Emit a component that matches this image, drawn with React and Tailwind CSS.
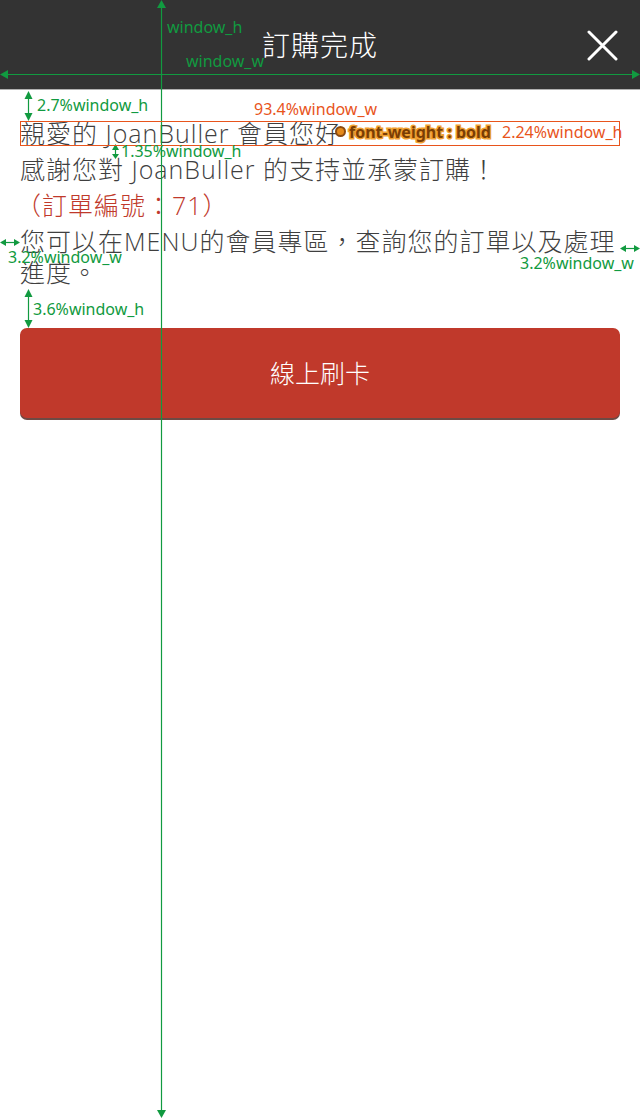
import React from "react";

const G = "#119a40";

function Label({ className, children, color = "text-[#119a40]" }) {
  return (
    <div
      className={`absolute whitespace-nowrap text-[16px] leading-[16px] ${color} ${className}`}
      style={{ fontFamily: '"Noto Sans", "Open Sans", sans-serif' }}
    >
      {children}
    </div>
  );
}

export default function App() {
  const font = '"Open Sans", "Noto Sans CJK TC", "Noto Sans", sans-serif';
  return (
    <div className="relative w-[640px] h-[1118px] bg-white overflow-hidden" style={{ fontFamily: font }}>
      {/* Header */}
      <div className="relative h-[90px] bg-[#333333] border-b border-[#b0b0b0] flex items-center justify-center">
        <div className="text-white text-[28px] font-light tracking-[1px]">訂購完成</div>
        <svg className="absolute right-[22px] top-[30px]" width="31" height="31" viewBox="0 0 31 31">
          <path d="M2 2 L29 29 M29 2 L2 29" stroke="white" strokeWidth="3" strokeLinecap="round" />
        </svg>
      </div>

      {/* Content */}
      <div className="flex flex-col gap-[5px] px-[20px] pt-[28px] text-[25px] leading-[31px] text-[#3f3f3f] font-light">
        <p className="tracking-[1px]">親愛的 JoanBuller 會員您好，</p>
        <p className="tracking-[1px]">感謝您對 JoanBuller 的支持並承蒙訂購！</p>
        <p className="tracking-[1px] text-[#c0392b] -ml-[4px]">（訂單編號：71）</p>
        <p className="tracking-[1px]">您可以在MENU的會員專區，查詢您的訂單以及處理進度。</p>
        <button className="mt-[35px] w-full h-[90px] rounded-[7px] bg-[#c0392b] text-white text-[25px] font-light shadow-[0_2px_0_#6e4a44] flex items-center justify-center">
          線上刷卡
        </button>
      </div>

      {/* Annotation overlay */}
      <div className="absolute inset-0 pointer-events-none">
        <svg className="absolute left-0 top-0" width="640" height="1118" viewBox="0 0 640 1118">
          <g stroke={G} strokeWidth="1.2" fill="none">
            <line x1="161.5" y1="4" x2="161.5" y2="1112" />
            <line x1="4" y1="74.5" x2="636" y2="74.5" />
            <line x1="28.5" y1="95" x2="28.5" y2="117" />
            <line x1="115.5" y1="148" x2="115.5" y2="156" />
            <line x1="4" y1="242.5" x2="16" y2="242.5" />
            <line x1="624" y1="248.5" x2="636" y2="248.5" />
            <line x1="28.5" y1="293" x2="28.5" y2="324" />
          </g>
          <g fill={G}>
            <polygon points="157,8 161.5,0 166,8" />
            <polygon points="157,1110 161.5,1118 166,1110" />
            <polygon points="8,70 0,74.5 8,79" />
            <polygon points="632,70 640,74.5 632,79" />
            <polygon points="24.5,99 28.5,91 32.5,99" />
            <polygon points="24.5,113 28.5,121 32.5,113" />
            <polygon points="112,150 115.5,144 119,150" />
            <polygon points="112,154 115.5,159 119,154" />
            <polygon points="6,239 0,242.5 6,246" />
            <polygon points="14,239 20,242.5 14,246" />
            <polygon points="626,245 620,248.5 626,252" />
            <polygon points="634,245 640,248.5 634,252" />
            <polygon points="24.5,297 28.5,289 32.5,297" />
            <polygon points="24.5,320 28.5,328 32.5,320" />
          </g>
        </svg>

        {/* orange box */}
        <div className="absolute left-[20px] top-[121px] w-[600px] h-[25px] border border-[#e8541c]" />

        <Label className="left-[167px] top-[19px]">window_h</Label>
        <Label className="left-[186px] top-[53px]">window_w</Label>
        <Label className="left-[37px] top-[97px]">2.7%window_h</Label>
        <Label className="left-[254px] top-[101px]" color="text-[#e8541c]">93.4%window_w</Label>
        <Label className="left-[121px] top-[143px]">1.35%window_h</Label>
        <Label className="left-[502px] top-[124px]" color="text-[#e8541c]">2.24%window_h</Label>
        <Label className="left-[8px] top-[249px]">3.2%window_w</Label>
        <Label className="left-[520px] top-[255px]">3.2%window_w</Label>
        <Label className="left-[33px] top-[301px]">3.6%window_h</Label>

        {/* bold marker */}
        <div className="absolute left-[335px] top-[126px] w-[11px] h-[11px] rounded-full bg-[#e58a1a] border-2 border-[#8a4a10]" />
        <div
          className="absolute left-[349px] top-[123px] text-[16px] leading-[18px] font-bold text-[#7a3d05] whitespace-nowrap [-webkit-text-stroke:3px_#f0a030] [paint-order:stroke_fill]"
          style={{ fontFamily: '"Noto Sans", sans-serif' }}
        >
          font-weight : bold
        </div>
      </div>
    </div>
  );
}
